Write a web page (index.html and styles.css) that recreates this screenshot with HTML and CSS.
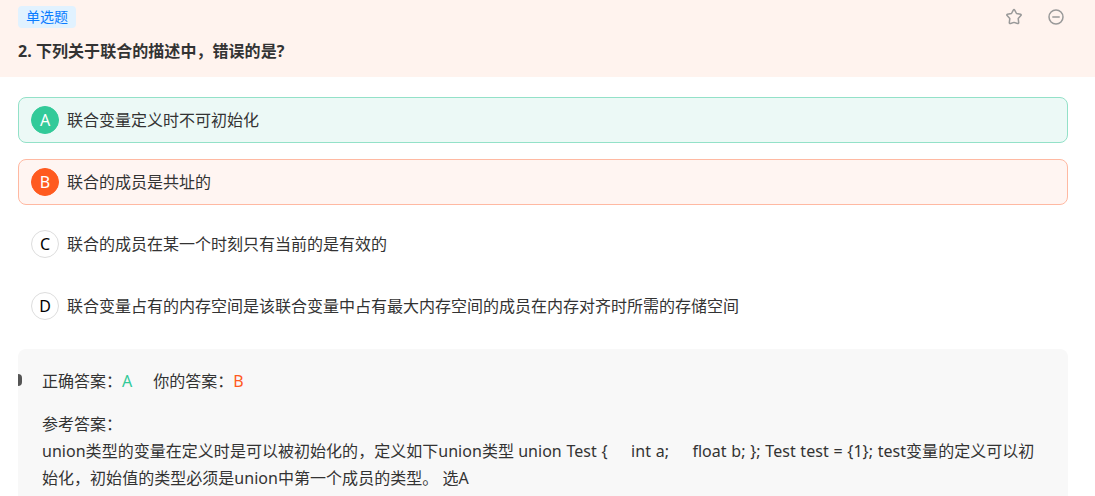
FILE: index.html
```html
<!DOCTYPE html>
<html lang="zh-CN">
<head>
    <meta charset="UTF-8">
    <meta name="viewport" content="width=device-width, initial-scale=1.0">
    <title>单选题</title>
    <link rel="stylesheet" href="styles.css">
</head>
<body>

<div class="question-header">
    <div class="header-top">
        <span class="tag">单选题</span>
        <div class="actions">
            <svg class="icon" viewBox="0 0 18 18">
                <path d="M8.3 2.1 Q9 1 9.7 2.1 L11.5 5.5 L15.6 6.3 Q16.7 6.7 15.9 7.6 L13.2 10.6 L13.7 14.7 Q13.7 15.9 12.5 15.5 L9 14.4 L5.5 15.5 Q4.3 15.9 4.3 14.7 L4.8 10.6 L2.1 7.6 Q1.3 6.7 2.4 6.3 L6.5 5.5 Z"/>
            </svg>
            <svg class="icon" viewBox="0 0 18 18">
                <circle cx="9" cy="9" r="7"/>
                <path d="M5.8 9 H12.2"/>
            </svg>
        </div>
    </div>
    <h2 class="question-title">2. 下列关于联合的描述中，错误的是?</h2>
</div>

<div class="options">
    <div class="option correct">
        <span class="letter">A</span>
        <span class="option-text">联合变量定义时不可初始化</span>
    </div>
    <div class="option wrong">
        <span class="letter">B</span>
        <span class="option-text">联合的成员是共址的</span>
    </div>
    <div class="option">
        <span class="letter">C</span>
        <span class="option-text">联合的成员在某一个时刻只有当前的是有效的</span>
    </div>
    <div class="option">
        <span class="letter">D</span>
        <span class="option-text">联合变量占有的内存空间是该联合变量中占有最大内存空间的成员在内存对齐时所需的存储空间</span>
    </div>
</div>

<div class="answer-panel">
    <span class="marker"></span>
    <div class="answer-row">
        <div>正确答案：<span class="right-answer">A</span></div>
        <div>你的答案：<span class="your-answer">B</span></div>
    </div>
    <div class="reference">
        <div>参考答案：</div>
        <div class="line">union类型的变量在定义时是可以被初始化的，定义如下union类型 <span class="code">union Test {&nbsp; &nbsp; &nbsp;int a;&nbsp; &nbsp; &nbsp;float b; }; Test test = {1}; test</span>变量的定义可以初</div>
        <div class="line">始化，初始值的类型必须是union中第一个成员的类型。 选A</div>
    </div>
</div>

</body>
</html>
```

FILE: styles.css
```css
* {
    box-sizing: border-box;
}
body {
    margin: 0;
    font-family: "Noto Sans", "Noto Sans CJK SC", sans-serif;
    font-size: 16px;
    color: #333;
    background-color: #fff;
    overflow: hidden;
}
.question-header {
    height: 77px;
    padding: 6px 30px 0 18px;
    background-color: #fff3ee;
}
.header-top {
    display: flex;
    justify-content: space-between;
    align-items: center;
    height: 22px;
}
.tag {
    height: 22px;
    padding: 0 8px;
    line-height: 22px;
    font-size: 14px;
    color: #0b7cff;
    background-color: #e1f2ff;
    border-radius: 4px;
}
.actions {
    display: flex;
    gap: 24px;
}
.icon {
    width: 18px;
    height: 18px;
    fill: none;
    stroke: #999;
    stroke-width: 1.5;
    stroke-linejoin: round;
    stroke-linecap: round;
}
.question-title {
    margin: 11px 0 0;
    font-size: 16px;
    line-height: 24px;
    font-weight: bold;
    letter-spacing: 0.05px;
}
.options {
    display: flex;
    flex-direction: column;
    gap: 16px;
    padding: 20px 27px 0 18px;
}
.option {
    display: flex;
    align-items: center;
    gap: 8px;
    height: 46px;
    padding: 0 12px;
    border: 1px solid transparent;
    border-radius: 8px;
}
.option-text {
    line-height: 24px;
}
.letter {
    width: 28px;
    height: 28px;
    line-height: 26px;
    text-align: center;
    color: #000;
    border: 1px solid #ddd;
    border-radius: 50%;
}
.option.correct {
    background-color: #ecf9f6;
    border-color: #93e1c8;
}
.option.correct .letter {
    color: #fff;
    background-color: #32ca99;
    border-color: #32ca99;
}
.option.wrong {
    background-color: #fff5f2;
    border-color: #ffb9a2;
}
.option.wrong .letter {
    color: #fff;
    background-color: #ff5a1f;
    border-color: #ff5a1f;
}
.answer-panel {
    position: relative;
    height: 170px;
    margin: 20px 27px 0 18px;
    padding: 20px 24px;
    background-color: #f8f8f8;
    border-radius: 8px;
}
.marker {
    position: absolute;
    left: 0;
    top: 25px;
    width: 4px;
    height: 12px;
    background-color: #555;
    border-radius: 0 4px 4px 0;
}
.answer-row {
    display: flex;
    gap: 21px;
    line-height: 24px;
}
.right-answer {
    color: #32ca99;
}
.your-answer {
    color: #ff5a1f;
}
.reference {
    margin-top: 18px;
    line-height: 27px;
}
.line {
    white-space: nowrap;
    letter-spacing: 0.03px;
}
.code {
    word-spacing: 0.5px;
}
```
